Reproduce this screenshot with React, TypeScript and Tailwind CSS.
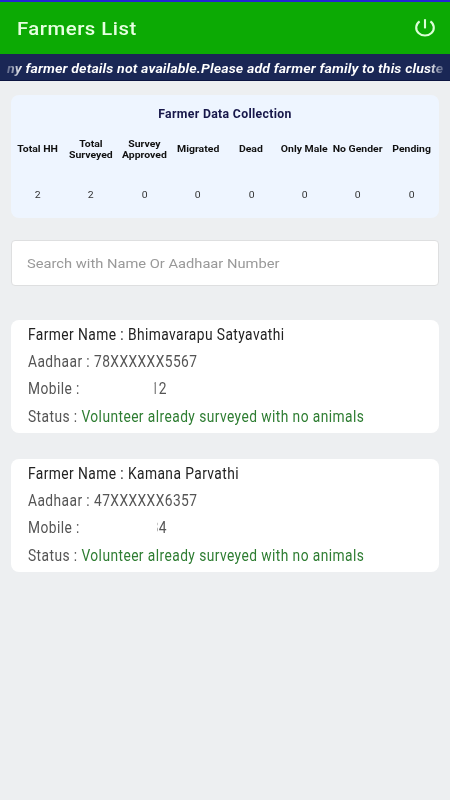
import React from 'react';

const columns = [
  { label: ['Total HH'], value: 2 },
  { label: ['Total', 'Surveyed'], value: 2 },
  { label: ['Survey', 'Approved'], value: 0 },
  { label: ['Migrated'], value: 0 },
  { label: ['Dead'], value: 0 },
  { label: ['Only Male'], value: 0 },
  { label: ['No Gender'], value: 0 },
  { label: ['Pending'], value: 0 },
];

const farmers = [
  { name: 'Bhimavarapu Satyavathi', aadhaar: '78XXXXXX5567', partial: '1', partialWidth: 'w-[5px]', last: '2' },
  { name: 'Kamana Parvathi', aadhaar: '47XXXXXX6357', partial: '3', partialWidth: 'w-[2.2px]', last: '4' },
];

function Header() {
  return (
    <header className="flex h-[54px] items-center justify-between border-t-2 border-[#2424d8] bg-[#0caa04] pl-[17px] pr-[14px]">
      <h1 className="origin-left scale-x-[1.1] pt-[3px] text-[18.5px] font-medium tracking-[0.45px] text-[#e6ffe0]">Farmers List</h1>
      <button aria-label="Log out" className="text-[#dcffd8]">
        <svg width="22" height="22" viewBox="0 0 22 22" fill="none" stroke="currentColor" strokeWidth="2.1">
          <path d="M11 2.2v9.2" />
          <path d="M5.6 4.4A8.8 7.9 0 1 0 16.4 4.4" />
        </svg>
      </button>
    </header>
  );
}

function Ticker() {
  return (
    <div className="flex h-[27px] items-center justify-center overflow-hidden border-b border-[#0c1440] bg-[#1a2755] px-[7px] pt-[2px]">
      <p className="w-[437px] overflow-hidden whitespace-nowrap">
        <span className="inline-block origin-left scale-x-[1.049] bg-[linear-gradient(90deg,#5d6788_0px,#ffffff_15px,#ffffff_402px,#465177_417px)] bg-clip-text text-[13.5px] font-bold italic leading-[20px] tracking-[0.1px] text-transparent">
          ny farmer details not available.Please add farmer family to this cluste
        </span>
      </p>
    </div>
  );
}

function Summary() {
  return (
    <section className="mt-[14px] h-[123px] rounded-[8px] bg-[#eef5ff]">
      <h2 className="scale-x-[0.91] pb-[1px] pt-[8px] text-center text-[13.5px] font-bold leading-[20px] tracking-[0.35px] text-[#17174a]">Farmer Data Collection</h2>
      <div className="mr-[1px] grid grid-cols-8">
        {columns.map((c) => (
          <div key={c.label.join(' ')} className="flex flex-col items-center">
            <div className="flex h-[51px] scale-x-[1.1] flex-col items-center justify-center whitespace-nowrap text-[9.5px] font-bold leading-[10.7px] text-[#111]">
              {c.label.map((l) => (
                <span key={l}>{l}</span>
              ))}
            </div>
            <div className="mt-[14px] scale-x-[1.1] text-[9.5px] leading-[12px] text-[#333]">{c.value}</div>
          </div>
        ))}
      </div>
    </section>
  );
}

function FarmerCard({ farmer }: { farmer: (typeof farmers)[number] }) {
  return (
    <article className="h-[113px] rounded-[8px] bg-white pl-[17px] pt-[1px] text-[16px] leading-[27.2px] text-[#555]">
      <div className="origin-left scale-x-[0.861] whitespace-nowrap tracking-[0.5px]">
        <p className="text-[#222]">Farmer Name : {farmer.name}</p>
        <p>Aadhaar : {farmer.aadhaar}</p>
        <p className="flex">
          <span className="flex w-[152px] justify-between">
            <span>Mobile :</span>
            <span className={`flex justify-end overflow-hidden ${farmer.partialWidth}`}>{farmer.partial}</span>
          </span>
          <span>{farmer.last}</span>
        </p>
        <p>
          Status : <span className="text-[#2e7d32]">Volunteer already surveyed with no animals</span>
        </p>
      </div>
    </article>
  );
}

export default function App() {
  return (
    <div className="h-[800px] w-[450px] overflow-hidden bg-[#edeff1] font-[Roboto,sans-serif]">
      <Header />
      <Ticker />
      <main className="px-[11px]">
        <Summary />
        <div className="mt-[22px] flex h-[46px] items-center rounded-[4px] border border-[#dedfe0] bg-white px-[15px] pt-[2px]">
          <input
            className="w-[360px] origin-left scale-x-[1.13] text-[13px] text-[#555] outline-none placeholder:text-[#999]"
            placeholder="Search with Name Or Aadhaar Number"
          />
        </div>
        <div className="mt-[34px] flex flex-col gap-[26px]">
          {farmers.map((f) => (
            <FarmerCard key={f.aadhaar} farmer={f} />
          ))}
        </div>
      </main>
    </div>
  );
}
